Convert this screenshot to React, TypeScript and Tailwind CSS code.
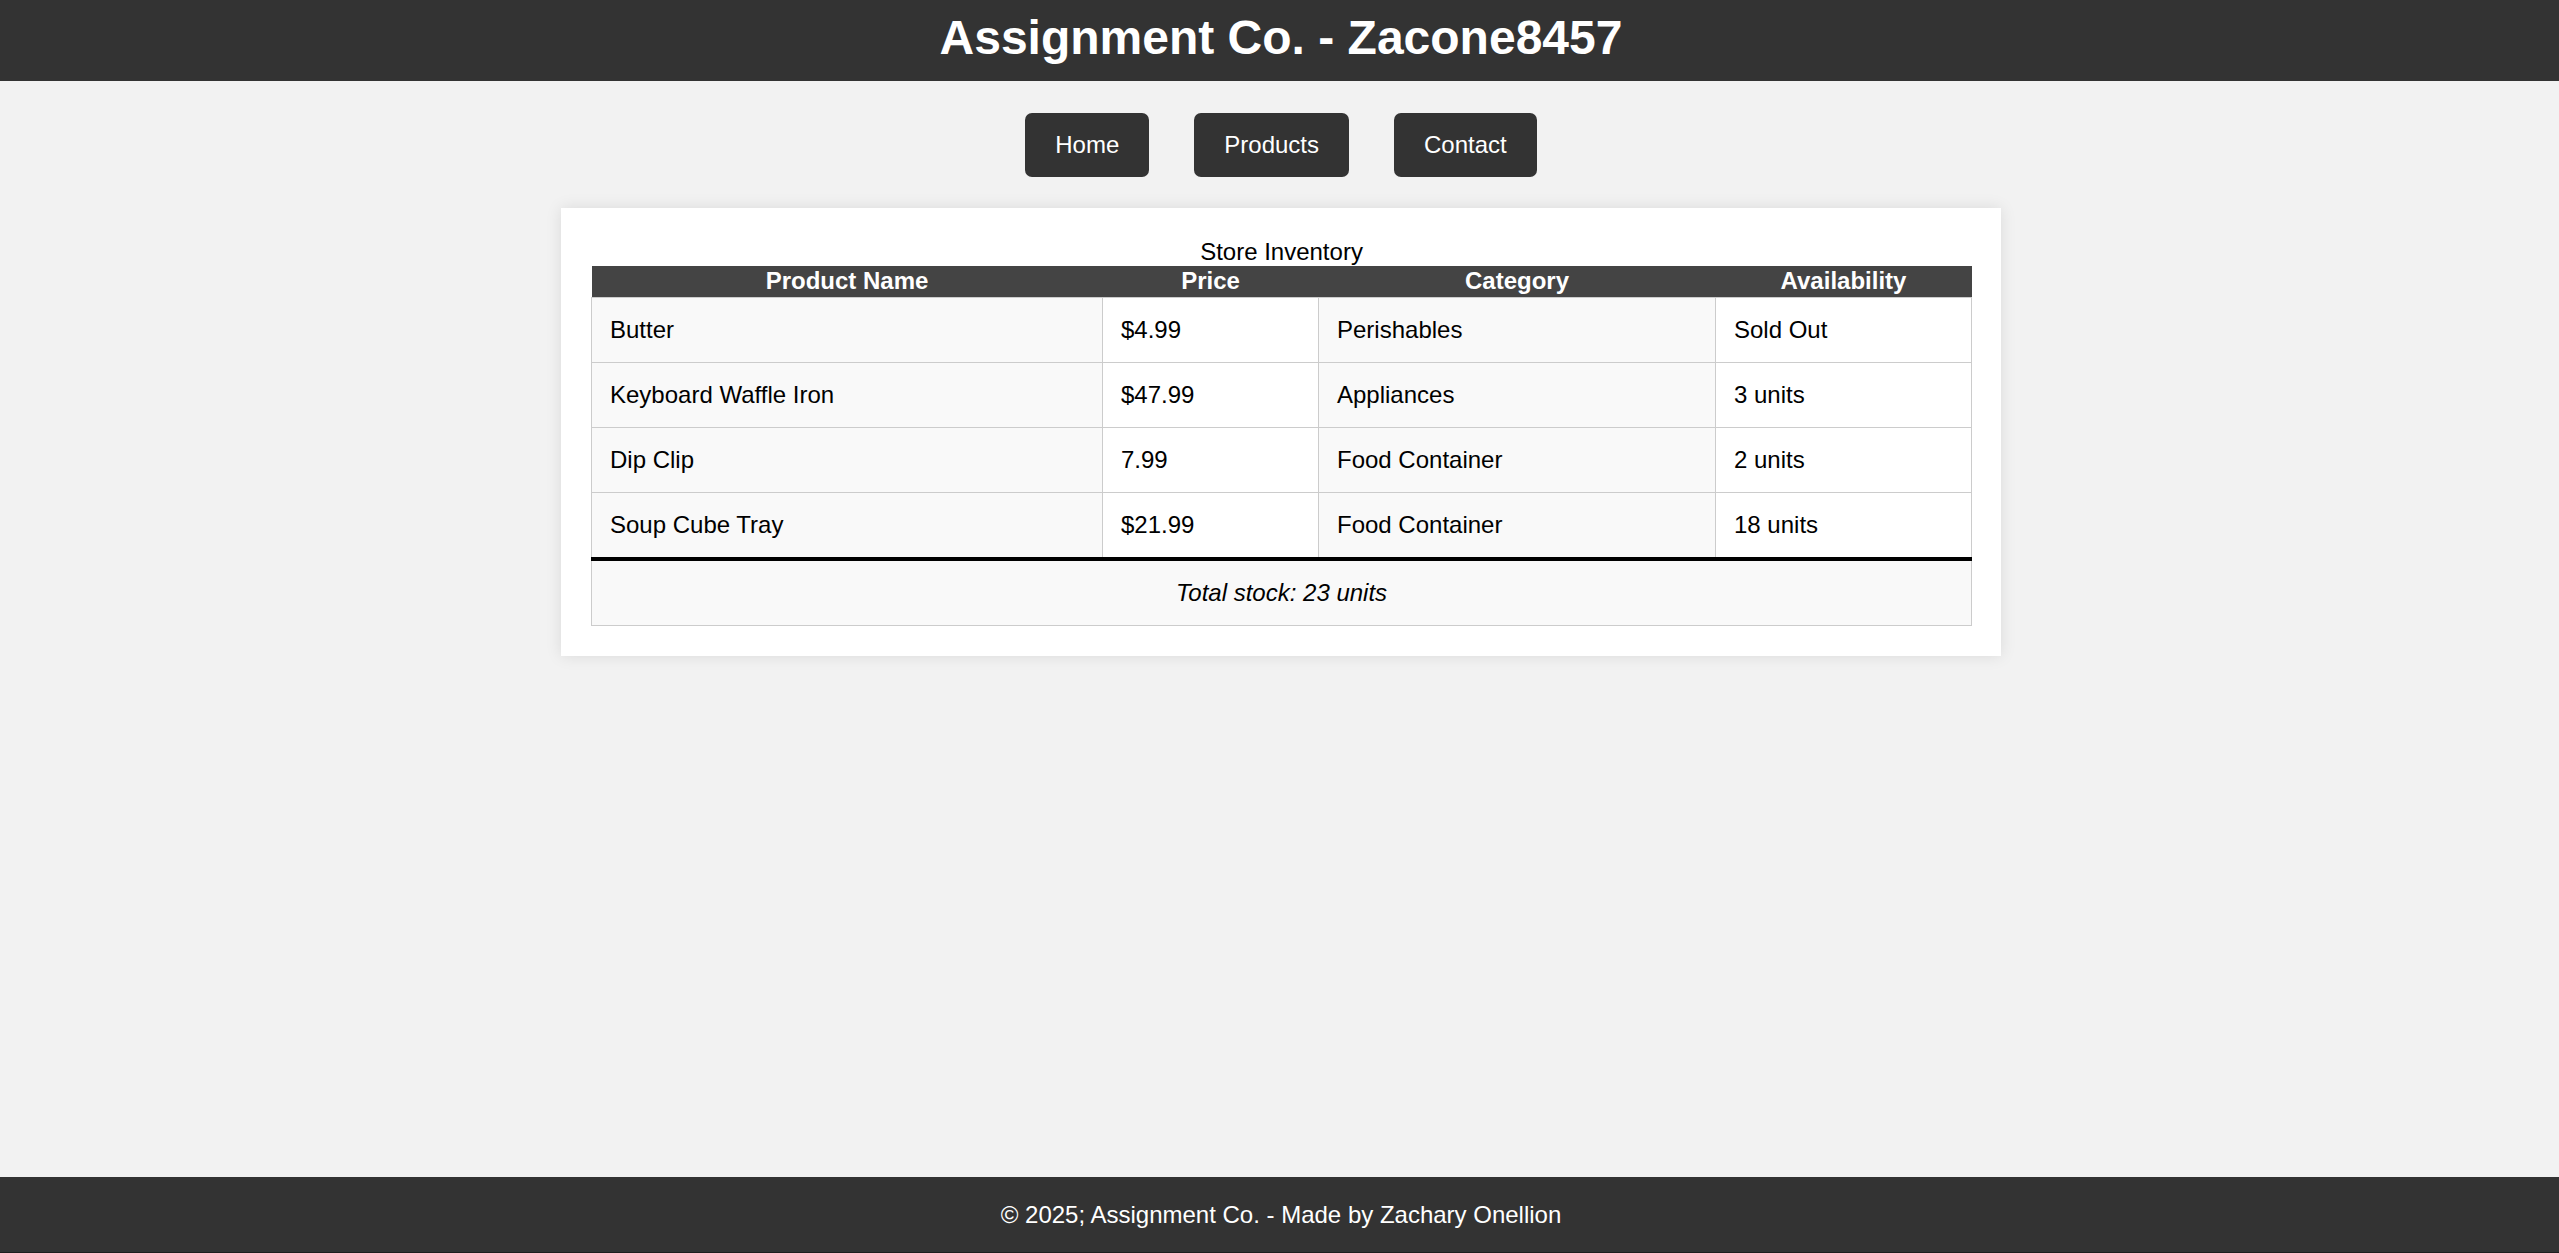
import React from "react";

const products = [
  { name: "Butter", price: "$4.99", category: "Perishables", stock: "Sold Out" },
  { name: "Keyboard Waffle Iron", price: "$47.99", category: "Appliances", stock: "3 units" },
  { name: "Dip Clip", price: "7.99", category: "Food Container", stock: "2 units" },
  { name: "Soup Cube Tray", price: "$21.99", category: "Food Container", stock: "18 units" },
];

export default function App() {
  return (
    <div
      className="min-h-screen flex flex-col bg-[#f2f2f2] text-black"
      style={{ fontFamily: '"Liberation Sans", Arial, sans-serif' }}
    >
      <header className="bg-[#333333] text-white text-center pt-[10px] pb-[16px] pl-[3px]">
        <h1 className="text-[48px] leading-[55px] font-bold">Assignment Co. - Zacone8457</h1>
      </header>

      <div className="flex-1 pl-[3px]">
        <nav className="flex justify-center gap-[45px] mt-[32px]">
          {["Home", "Products", "Contact"].map((item) => (
            <a
              key={item}
              href="#"
              className="bg-[#333333] text-white text-[24px] leading-[28px] px-[30px] py-[18px] rounded-[7px]"
            >
              {item}
            </a>
          ))}
        </nav>

        <main className="w-[1440px] mx-auto mt-[31px] bg-white p-[30px] shadow-[0_0_15px_rgba(0,0,0,0.1)]">
          <table className="w-full table-fixed border-collapse text-[24px] leading-[28px]">
            <caption className="leading-[28px]">Store Inventory</caption>
            <colgroup>
              <col className="w-[511px]" />
              <col className="w-[216px]" />
              <col className="w-[397px]" />
              <col className="w-[256px]" />
            </colgroup>
            <thead>
              <tr className="bg-[#444444] text-white">
                <th className="h-[31px] p-0 font-bold">Product Name</th>
                <th className="h-[31px] p-0 font-bold">Price</th>
                <th className="h-[31px] p-0 font-bold">Category</th>
                <th className="h-[31px] p-0 font-bold">Availability</th>
              </tr>
            </thead>
            <tbody>
              {products.map((p) => (
                <tr key={p.name}>
                  <td className="border border-[#cccccc] bg-[#f9f9f9] px-[18px] py-[18px] text-left">{p.name}</td>
                  <td className="border border-[#cccccc] bg-white px-[18px] py-[18px] text-left">{p.price}</td>
                  <td className="border border-[#cccccc] bg-[#f9f9f9] px-[18px] py-[18px] text-left">{p.category}</td>
                  <td className="border border-[#cccccc] bg-white px-[18px] py-[18px] text-left">{p.stock}</td>
                </tr>
              ))}
            </tbody>
            <tfoot>
              <tr>
                <td
                  colSpan={4}
                  className="border border-[#cccccc] border-t-[4px] border-t-black bg-[#f9f9f9] py-[18px] text-center italic"
                >
                  Total stock: 23 units
                </td>
              </tr>
            </tfoot>
          </table>
        </main>
      </div>

      <footer className="bg-[#333333] text-white text-center text-[24px] leading-[28px] pt-[24px] pb-[23px] pl-[3px] border-b border-[#1e1e1e]">
        © 2025; Assignment Co. - Made by Zachary Onellion
      </footer>
    </div>
  );
}
